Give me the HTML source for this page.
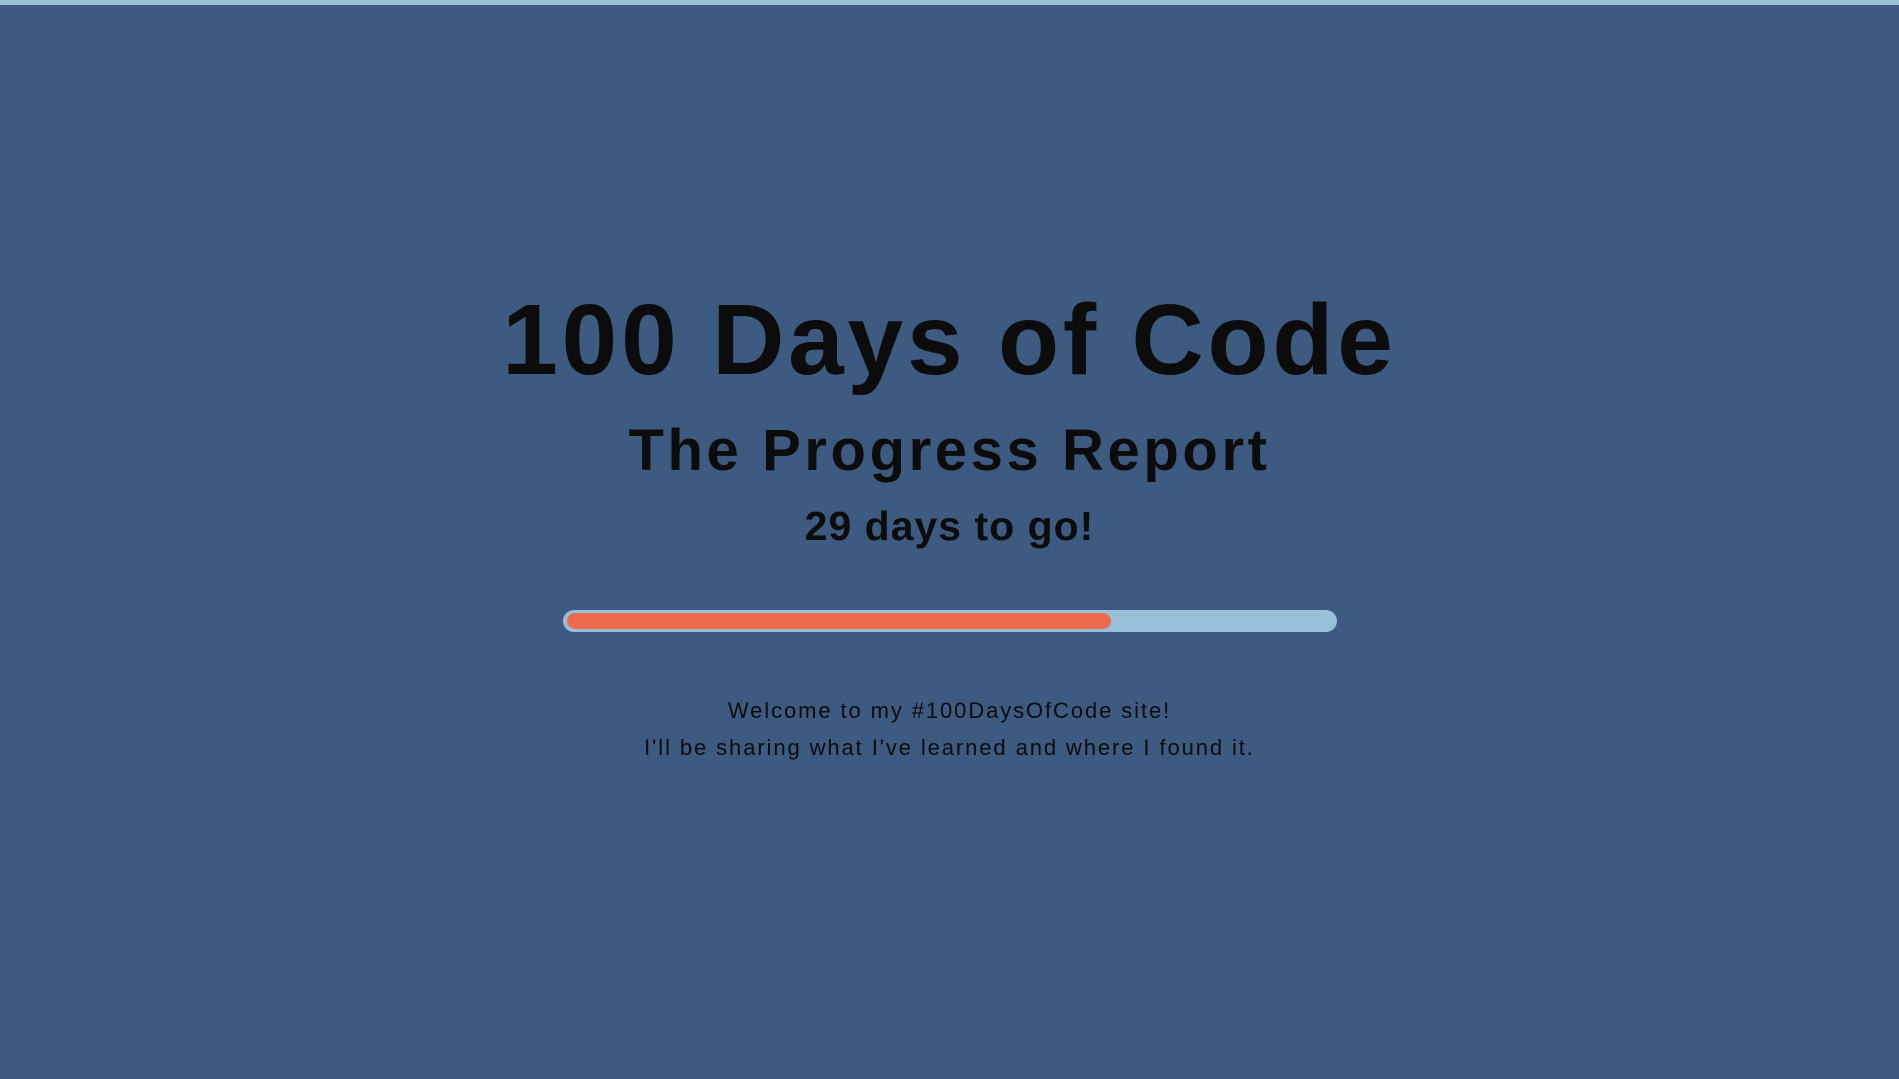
<!DOCTYPE html>
<html><head><style>
html,body{margin:0;padding:0}
body{width:1899px;height:1079px;background:#3d5a80;position:relative;overflow:hidden;font-family:"Liberation Sans",sans-serif;color:#0c0c0c}
.top{position:absolute;left:0;top:0;width:1899px;height:5px;background:#98c1d9}
.t{position:absolute;left:0;width:1899px;text-align:center;line-height:1;white-space:nowrap}
.bar{position:absolute;left:563px;top:610px;width:774px;height:22px;background:#98c1d9;border-radius:11px}
.fill{position:absolute;left:4px;top:3px;width:544px;height:16px;background:#ee6c4d;border-radius:8px}
</style></head><body>
<div class="top"></div>
<div class="t" style="top:290px;font-size:100px;font-weight:bold;letter-spacing:3.8px">100 Days of Code</div>
<div class="t" style="top:422px;font-size:58px;font-weight:bold;letter-spacing:3.6px">The Progress Report</div>
<div class="t" style="top:506px;font-size:41px;font-weight:bold;letter-spacing:1px">29 days to go!</div>
<div class="bar"><div class="fill"></div></div>
<div class="t" style="top:700px;font-size:22px;letter-spacing:1.9px">Welcome to my #100DaysOfCode site!</div>
<div class="t" style="top:737px;font-size:22px;letter-spacing:1.9px">I'll be sharing what I've learned and where I found it.</div>
</body></html>
